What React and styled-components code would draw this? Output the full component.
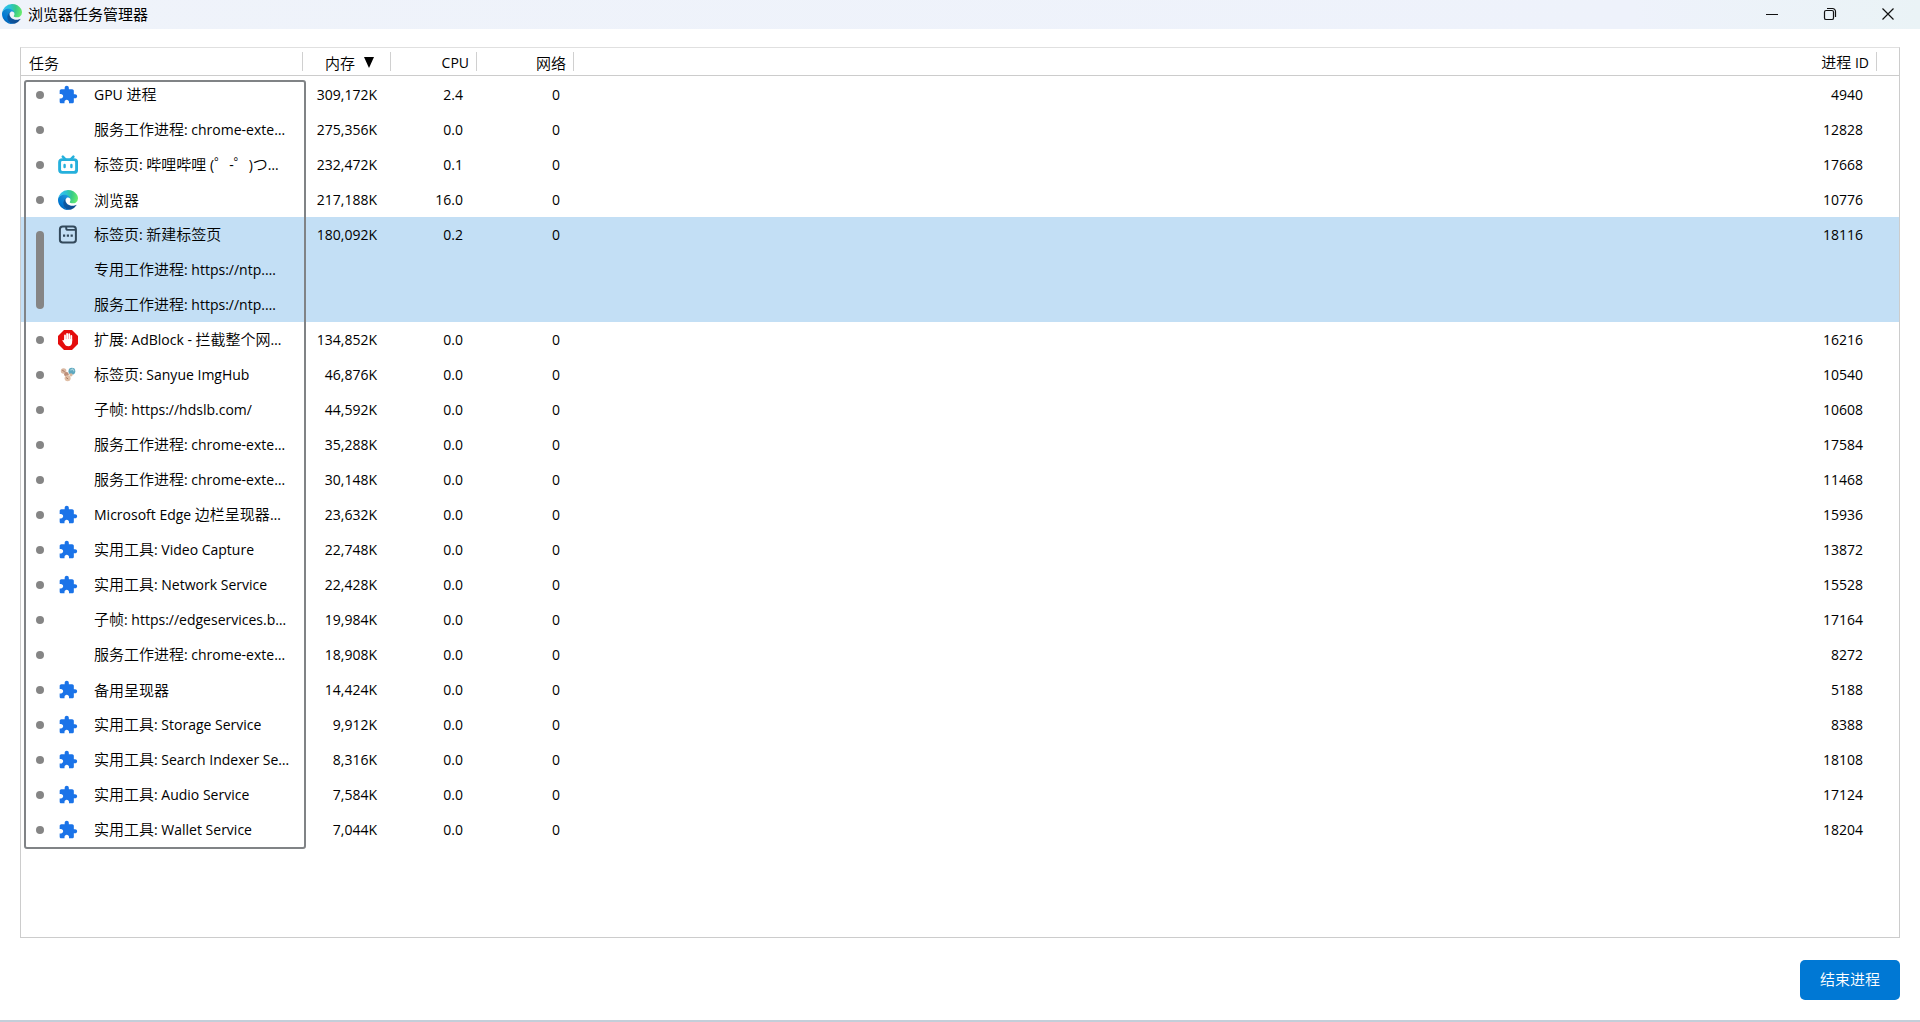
import styled, { createGlobalStyle } from 'styled-components';

const GlobalStyle = createGlobalStyle`
  * {
    box-sizing: border-box;
  }

  body {
    margin: 0;
    background: #ffffff;
    color: #000000;
    font-family: "Noto Sans CJK SC", sans-serif;
    font-size: 15px;
    font-weight: 350;
    line-height: 20px;
  }
`;

const Window = styled.div`
  display: flex;
  flex-direction: column;
  min-height: 100vh;
  border-bottom: 2px solid #c3ced9;
`;

const TitleBar = styled.header`
  display: flex;
  align-items: center;
  height: 29px;
  padding: 0 3px 2px 2px;
  background: linear-gradient(90deg, #eff3fa 0%, #eef2fb 85%, #eaf3f6 100%);
`;

const Title = styled.h1`
  flex: 1;
  margin: 0 0 0 6px;
  font-size: 15px;
  font-weight: 400;
`;

const WindowButton = styled.button`
  display: flex;
  align-items: center;
  justify-content: center;
  width: 58px;
  height: 27px;
  padding: 0;
  border: 0;
  background: transparent;
  color: #111111;
`;

const Content = styled.main`
  display: flex;
  flex: 1;
  flex-direction: column;
  gap: 22px;
  padding: 18px 20px 20px;
`;

const Panel = styled.section`
  flex: 1;
  border: 1px solid #cccccc;
  border-top-color: #e0e0e0;
`;

const TableArea = styled.div`
  position: relative;
`;

const FocusRing = styled.div`
  position: absolute;
  top: 32px;
  bottom: -2px;
  left: 3px;
  width: 282px;
  border: 2px solid #808386;
  border-radius: 3px;
  pointer-events: none;
`;

const Table = styled.table`
  width: 100%;
  table-layout: fixed;
  border-collapse: separate;
  border-spacing: 0;

  tbody::before {
    content: "";
    display: table-row;
    height: 1px;
  }
`;

const Col = styled.col`
  width: ${({ $width }) => $width || 'auto'};
`;

const HeadCell = styled.th`
  height: 28px;
  padding: 0;
  border-bottom: 1px solid #cccccc;
  font-weight: 350;
`;

const HeadLabel = styled.div`
  display: flex;
  align-items: center;
  justify-content: ${({ $left }) => ($left ? 'flex-start' : 'flex-end')};
  gap: 9px;
  height: 19px;
  padding: 2px ${({ $sorted }) => ($sorted ? '16px' : '7px')} 0 8px;
  border-right: 1px solid #d0d0d0;
`;

const Row = styled.tr`
  height: 35px;
  background: ${({ $selected }) => ($selected ? '#c3dff5' : 'transparent')};
`;

const Cell = styled.td`
  padding: 0;
  white-space: nowrap;
`;

const NumberCell = styled(Cell)`
  padding-right: 14px;
  text-align: right;
`;

const MarkerCell = styled(Cell)`
  padding-left: 15px;
`;

const Marker = styled.div`
  width: 8px;
  height: ${({ $rows }) => ($rows - 1) * 35 + 8}px;
  border-radius: 4px;
  background: #858585;
`;

const IconCell = styled(Cell)`
  svg {
    display: block;
  }
`;

const Latin = styled.span`
  font-family: "Open Sans", sans-serif;
  font-size: 14px;
  font-weight: 400;
`;

const Footer = styled.footer`
  display: flex;
  justify-content: flex-end;
`;

const EndButton = styled.button`
  height: 40px;
  padding: 0 20px 2px;
  border: 0;
  border-radius: 5px;
  background: #0078d4;
  color: #ffffff;
  font: inherit;
`;

// Latin runs are set one pixel smaller than the Chinese text around them
const Text = ({ children }) =>
  children
    .split(/([\x20-\x7e\u2026]+)/)
    .filter(Boolean)
    .map((part, i) => (/^[\x20-\x7e\u2026]/.test(part) ? <Latin key={i}>{part}</Latin> : part));

const EdgeIcon = ({ id }) => (
  <svg width="20" height="20" viewBox="0 0 256 256" aria-hidden="true">
    <defs>
      <linearGradient id={`${id}a`} x1="60" y1="177" x2="240" y2="177" gradientUnits="userSpaceOnUse">
        <stop offset="0" stopColor="#0c59a4" />
        <stop offset="1" stopColor="#114a8b" />
      </linearGradient>
      <linearGradient id={`${id}b`} x1="152" y1="85" x2="45" y2="222" gradientUnits="userSpaceOnUse">
        <stop offset="0" stopColor="#1b9de2" />
        <stop offset="0.4" stopColor="#1384cf" />
        <stop offset="0.8" stopColor="#0078d4" />
        <stop offset="1" stopColor="#0467b8" />
      </linearGradient>
      <radialGradient id={`${id}c`} cx="26" cy="50" r="230" gradientUnits="userSpaceOnUse">
        <stop offset="0" stopColor="#35c1f1" />
        <stop offset="0.35" stopColor="#2bc3d2" />
        <stop offset="0.65" stopColor="#36c98a" />
        <stop offset="1" stopColor="#66eb6e" />
      </radialGradient>
    </defs>
    <path
      fill={`url(#${id}a)`}
      d="M231 190.5c-3.4 1.8-6.9 3.4-10.5 4.7a101.5 101.5 0 0 1-35.9 6.5c-47.3 0-88.5-32.5-88.5-74.3.1-11.4 6.4-21.9 16.4-27.3-42.8 1.8-53.8 46.4-53.8 72.5 0 74 68.1 81.4 82.8 81.4 7.9 0 19.8-2.3 27-4.6l1.3-.4a128.3 128.3 0 0 0 66.6-52.8 4 4 0 0 0-5.4-5.7z"
    />
    <path
      fill={`url(#${id}b)`}
      d="M105.7 241.4a79.2 79.2 0 0 1-22.7-21.3 80.7 80.7 0 0 1 29.5-120c3.2-1.5 8.5-4.1 15.6-4a32.4 32.4 0 0 1 25.7 13 31.9 31.9 0 0 1 6.3 18.7c0-.2 24.5-79.6-80-79.6-43.9 0-80 41.6-80 78.2a130.2 130.2 0 0 0 12.1 56 128 128 0 0 0 156.4 67 75.5 75.5 0 0 1-62.8-8z"
    />
    <path
      fill={`url(#${id}c)`}
      d="M152.3 148.9c-.9 1-3.4 2.5-3.4 5.6 0 2.6 1.7 5.2 4.8 7.3 14.3 10 41.4 8.6 41.5 8.6 10.7 0 21.1-2.9 30.3-8.3a61.4 61.4 0 0 0 30.4-52.9c.3-22.4-8-37.3-11.3-43.9C223.5 23.9 177.7 0 128 0A128 128 0 0 0 0 126.2c.5-36.5 36.8-66 80-66 3.5 0 23.5.3 42 10.1 16.3 8.6 24.9 19 30.9 29.3 6.2 10.7 7.3 24.1 7.3 29.5 0 5.3-2.7 13.3-7.8 19.9z"
    />
  </svg>
);

const PuzzleIcon = () => (
  <svg width="20" height="20" viewBox="0 0 24 24" fill="#1a73e8" aria-hidden="true">
    <path d="M20.5 11H19V7c0-1.1-.9-2-2-2h-4V3.5C13 2.12 11.88 1 10.5 1S8 2.12 8 3.5V5H4c-1.1 0-1.99.9-1.99 2v3.8H3.5c1.49 0 2.7 1.21 2.7 2.7s-1.21 2.7-2.7 2.7H2V20c0 1.1.9 2 2 2h3.8v-1.5c0-1.49 1.21-2.7 2.7-2.7 1.49 0 2.7 1.21 2.7 2.7V22H17c1.1 0 2-.9 2-2v-4h1.5c1.38 0 2.5-1.12 2.5-2.5S21.88 11 20.5 11z" />
  </svg>
);

const BilibiliIcon = () => (
  <svg width="20" height="20" viewBox="0 0 20 20" fill="none" stroke="#25b0dc" strokeLinecap="round" aria-hidden="true">
    <rect x="1.6" y="4.6" width="17" height="12.8" rx="2.6" strokeWidth="2.9" />
    <path d="M4.8 1.6l2.6 2.8M15.4 1.6l-2.6 2.8" strokeWidth="2.5" />
    <path d="M6.6 10v2M13.4 10v2" strokeWidth="2.4" />
  </svg>
);

const NewTabIcon = () => (
  <svg width="20" height="20" viewBox="0 0 20 20" fill="none" stroke="#33495b" aria-hidden="true">
    <rect x="1.9" y="1.6" width="16" height="16" rx="2.8" strokeWidth="2" />
    <path d="M8.2 1.8v1.4c0 1 .7 1.7 1.7 1.7h7.8" strokeWidth="1.9" />
    <path d="M5 10.6h2.2M8.8 10.6H11M12.6 10.6h2.2" strokeWidth="2.3" />
  </svg>
);

const AdBlockIcon = () => (
  <svg width="20" height="20" viewBox="0 0 20 20" aria-hidden="true">
    <path fill="#e40d0d" d="M6 0h8l6 6v8l-6 6H6l-6-6V6z" />
    <path
      fill="none"
      stroke="#ffffff"
      strokeWidth="1.8"
      strokeLinecap="round"
      d="M7 10.5V5.4M9.1 10V3.8M11.2 10V4.2M13.3 11V5.8"
    />
    <path fill="#ffffff" d="M6.2 9h7.9v3.6c0 2.2-1.6 3.7-3.8 3.7-1.8 0-2.9-.8-3.7-2.2l-2.3-3.7c.8-.6 1.4-.4 1.9.2z" />
  </svg>
);

const ImgHubIcon = () => (
  <svg width="20" height="20" viewBox="0 0 20 20" aria-hidden="true">
    <circle cx="5.6" cy="6" r="2.8" fill="#d9b8a2" />
    <circle cx="8.4" cy="9.2" r="2.3" fill="#bd8f79" />
    <circle cx="9.6" cy="13.2" r="3" fill="#e0bfa6" />
    <circle cx="13.9" cy="6.2" r="3.4" fill="#5fa8bf" />
    <path d="M12.4 5.2l2.2-1.2 1.4 2.2" fill="none" stroke="#a6d4df" strokeWidth="1.2" />
    <circle cx="13" cy="9.8" r="1.6" fill="#d8b99f" />
    <path d="M4.2 5.2l2.4 1.4M8.2 12.6l2 1.4" stroke="#a87762" />
  </svg>
);

const icons = {
  puzzle: <PuzzleIcon />,
  bilibili: <BilibiliIcon />,
  edge: <EdgeIcon id="row" />,
  newtab: <NewTabIcon />,
  adblock: <AdBlockIcon />,
  imghub: <ImgHubIcon />,
};

const processes = [
  { icon: 'puzzle', tasks: ['GPU 进程'], memory: '309,172K', cpu: '2.4', pid: '4940' },
  { tasks: ['服务工作进程: chrome-exte…'], memory: '275,356K', cpu: '0.0', pid: '12828' },
  { icon: 'bilibili', tasks: ['标签页: 哔哩哔哩 (゜-゜)つ…'], memory: '232,472K', cpu: '0.1', pid: '17668' },
  { icon: 'edge', tasks: ['浏览器'], memory: '217,188K', cpu: '16.0', pid: '10776' },
  {
    icon: 'newtab',
    tasks: ['标签页: 新建标签页', '专用工作进程: https://ntp.…', '服务工作进程: https://ntp.…'],
    memory: '180,092K',
    cpu: '0.2',
    pid: '18116',
    selected: true,
  },
  { icon: 'adblock', tasks: ['扩展: AdBlock - 拦截整个网…'], memory: '134,852K', cpu: '0.0', pid: '16216' },
  { icon: 'imghub', tasks: ['标签页: Sanyue ImgHub'], memory: '46,876K', cpu: '0.0', pid: '10540' },
  { tasks: ['子帧: https://hdslb.com/'], memory: '44,592K', cpu: '0.0', pid: '10608' },
  { tasks: ['服务工作进程: chrome-exte…'], memory: '35,288K', cpu: '0.0', pid: '17584' },
  { tasks: ['服务工作进程: chrome-exte…'], memory: '30,148K', cpu: '0.0', pid: '11468' },
  { icon: 'puzzle', tasks: ['Microsoft Edge 边栏呈现器…'], memory: '23,632K', cpu: '0.0', pid: '15936' },
  { icon: 'puzzle', tasks: ['实用工具: Video Capture'], memory: '22,748K', cpu: '0.0', pid: '13872' },
  { icon: 'puzzle', tasks: ['实用工具: Network Service'], memory: '22,428K', cpu: '0.0', pid: '15528' },
  { tasks: ['子帧: https://edgeservices.b…'], memory: '19,984K', cpu: '0.0', pid: '17164' },
  { tasks: ['服务工作进程: chrome-exte…'], memory: '18,908K', cpu: '0.0', pid: '8272' },
  { icon: 'puzzle', tasks: ['备用呈现器'], memory: '14,424K', cpu: '0.0', pid: '5188' },
  { icon: 'puzzle', tasks: ['实用工具: Storage Service'], memory: '9,912K', cpu: '0.0', pid: '8388' },
  { icon: 'puzzle', tasks: ['实用工具: Search Indexer Se…'], memory: '8,316K', cpu: '0.0', pid: '18108' },
  { icon: 'puzzle', tasks: ['实用工具: Audio Service'], memory: '7,584K', cpu: '0.0', pid: '17124' },
  { icon: 'puzzle', tasks: ['实用工具: Wallet Service'], memory: '7,044K', cpu: '0.0', pid: '18204' },
];

const Process = ({ icon, tasks, memory, cpu, pid, selected }) =>
  tasks.map((task, i) => (
    <Row key={task} $selected={selected} aria-selected={Boolean(selected)}>
      {i === 0 && (
        <MarkerCell rowSpan={tasks.length}>
          <Marker $rows={tasks.length} />
        </MarkerCell>
      )}
      <IconCell>{i === 0 && icons[icon]}</IconCell>
      <Cell><Text>{task}</Text></Cell>
      <NumberCell>{i === 0 && <Text>{memory}</Text>}</NumberCell>
      <NumberCell>{i === 0 && <Text>{cpu}</Text>}</NumberCell>
      <NumberCell>{i === 0 && <Text>0</Text>}</NumberCell>
      <NumberCell>{i === 0 && <Text>{pid}</Text>}</NumberCell>
      <Cell />
    </Row>
  ));

const App = () => {
  return (
    <>
      <GlobalStyle />
      <Window>
        <TitleBar>
          <EdgeIcon id="title" />
          <Title>浏览器任务管理器</Title>
          <WindowButton aria-label="最小化">
            <svg width="14" height="14" viewBox="0 0 14 14" stroke="currentColor">
              <path d="M1 7.5h12" />
            </svg>
          </WindowButton>
          <WindowButton aria-label="还原">
            <svg width="14" height="14" viewBox="0 0 14 14" fill="none" stroke="currentColor" strokeWidth="1.2">
              <rect x="1.5" y="3.5" width="9" height="9" rx="1.6" />
              <path d="M4 1.5h5.5a3 3 0 0 1 3 3V10" />
            </svg>
          </WindowButton>
          <WindowButton aria-label="关闭">
            <svg width="14" height="14" viewBox="0 0 14 14" stroke="currentColor" strokeWidth="1.2">
              <path d="M1.5 1.5l11 11M12.5 1.5l-11 11" />
            </svg>
          </WindowButton>
        </TitleBar>
        <Content>
          <Panel>
            <TableArea>
              <Table>
                <colgroup>
                  <Col $width="37px" />
                  <Col $width="36px" />
                  <Col $width="209px" />
                  <Col $width="88px" />
                  <Col $width="86px" />
                  <Col $width="97px" />
                  <Col />
                  <Col $width="22px" />
                </colgroup>
                <thead>
                  <tr>
                    <HeadCell colSpan={3}><HeadLabel $left>任务</HeadLabel></HeadCell>
                    <HeadCell aria-sort="descending">
                      <HeadLabel $sorted>
                        内存
                        <svg width="10" height="11" viewBox="0 0 10 11" aria-hidden="true">
                          <path d="M0 0h10L5 11z" />
                        </svg>
                      </HeadLabel>
                    </HeadCell>
                    <HeadCell><HeadLabel><Text>CPU</Text></HeadLabel></HeadCell>
                    <HeadCell><HeadLabel>网络</HeadLabel></HeadCell>
                    <HeadCell><HeadLabel><span><Text>进程 ID</Text></span></HeadLabel></HeadCell>
                    <HeadCell />
                  </tr>
                </thead>
                <tbody>
                  {processes.map((process) => (
                    <Process key={process.pid} {...process} />
                  ))}
                </tbody>
              </Table>
              <FocusRing />
            </TableArea>
          </Panel>
          <Footer>
            <EndButton>结束进程</EndButton>
          </Footer>
        </Content>
      </Window>
    </>
  );
};

export default App;
